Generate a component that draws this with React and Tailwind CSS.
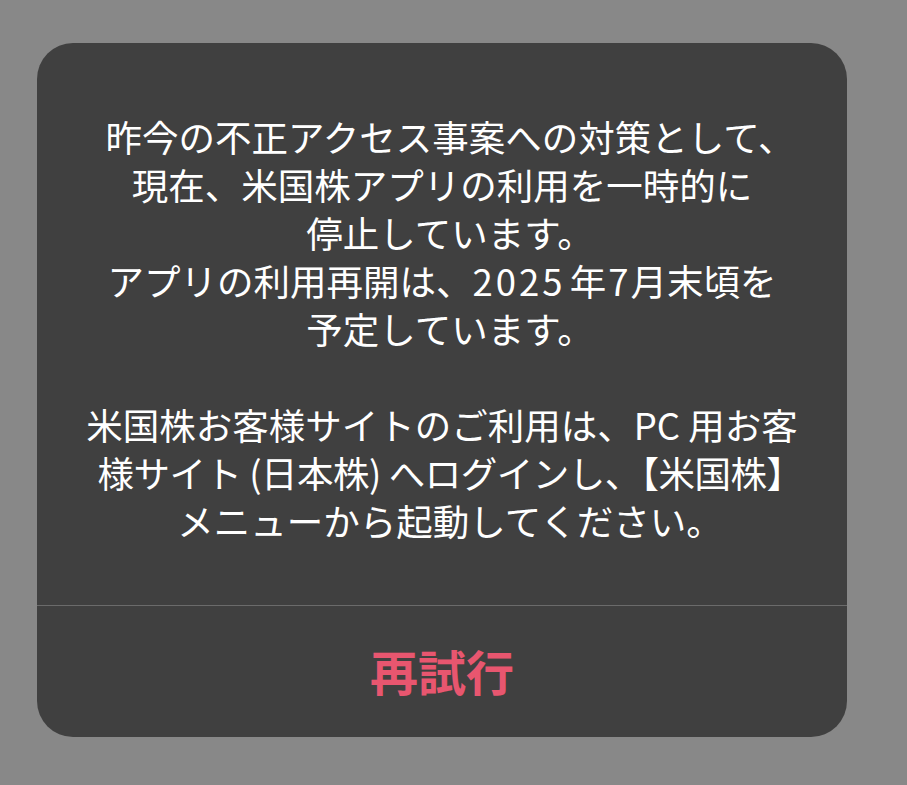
// iOS compresses punctuation at line end; mimic with a negative margin
const End = ({ children }) => <span className="-mr-[16px]">{children}</span>

export default function App() {
  return (
    <div
      className="min-h-screen w-full bg-[#888888] pt-[43px] px-[37px]"
      style={{ fontFamily: '"Noto Sans CJK JP", "Noto Sans", sans-serif' }}
    >
      <div className="w-[810px] rounded-[36px] bg-[#404040] overflow-hidden">
        <div className="pt-[70px] pb-[60px] px-2 text-center text-white text-[36.5px] leading-[48px]">
          <div className="whitespace-nowrap">昨今の不正アクセス事案への対策として<End>、</End></div>
          <div className="whitespace-nowrap">現在、米国株アプリの利用を一時的に</div>
          <div className="whitespace-nowrap">停止しています<End>。</End></div>
          <div className="whitespace-nowrap">
            アプリの利用再開は、<span className="tracking-[3px]">2025</span>
            <span className="ml-[4px]">年</span>
            <span className="mx-[2px]">7</span>月末頃を
          </div>
          <div className="whitespace-nowrap">予定しています<End>。</End></div>
          <div className="h-[48px]" />
          <div className="whitespace-nowrap">米国株お客様サイトのご利用は、PC 用お客</div>
          <div className="whitespace-nowrap tracking-[-0.5px]">様サイト (日本株) へログインし、【米国株<End>】</End></div>
          <div className="whitespace-nowrap">メニューから起動してください<End>。</End></div>
        </div>
        <div className="h-px bg-[#6b6b6b]" />
        <button className="w-full h-[131px] flex items-center justify-center pb-[3px] text-[48px] font-bold text-[#e8566f]">
          再試行
        </button>
      </div>
    </div>
  )
}
